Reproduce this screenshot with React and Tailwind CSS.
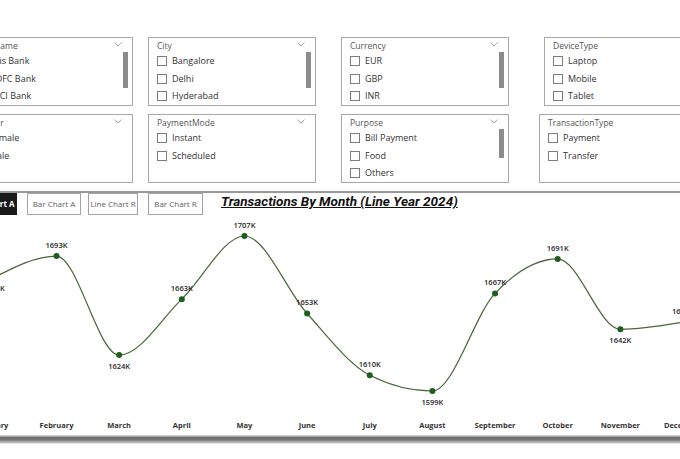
import React from "react";

const FONT = { fontFamily: '"Open Sans", "Noto Sans", sans-serif' };

function Chevron() {
  return (
    <svg className="absolute right-[10px] top-[4px]" width="8" height="5" viewBox="0 0 8 5">
      <polyline points="0.5,0.5 4,4 7.5,0.5" fill="none" stroke="#9a9a9a" strokeWidth="0.9" />
    </svg>
  );
}

function Slicer({ title, items, chevron = true, scrollH = 0, className = "" }) {
  return (
    <div className={"relative h-[69px] w-[168px] shrink-0 border border-[#a9a9a9] bg-white pl-[8px] pt-[1px] " + className}>
      <div className="h-[13px] text-[8.5px] leading-[13px] text-[#555]">{title}</div>
      {items.map((it) => (
        <div key={it} className="flex h-[17.5px] items-center gap-[5px] pt-[1px]">
          <div className="h-[10px] w-[10px] shrink-0 border border-[#7d7d7d] bg-white" />
          <div className="whitespace-nowrap text-[9px] leading-[12px] text-[#333]">{it}</div>
        </div>
      ))}
      {chevron && <Chevron />}
      {scrollH > 0 && (
        <div className="absolute right-[4px] top-[14px] w-[5px] bg-[#8c8c8c]" style={{ height: scrollH }} />
      )}
    </div>
  );
}

const months = ["January", "February", "March", "April", "May", "June", "July", "August", "September", "October", "November", "December"];
const values = [1678, 1693, 1624, 1663, 1707, 1653, 1610, 1599, 1667, 1691, 1642, 1647];
const below = [true, false, true, false, false, false, false, true, false, false, true, false];
const TOP = 215;

function monotonePath(pts) {
  const n = pts.length;
  const s = [];
  for (let i = 0; i < n - 1; i++) s.push((pts[i + 1][1] - pts[i][1]) / (pts[i + 1][0] - pts[i][0]));
  const t = new Array(n).fill(0);
  for (let i = 1; i < n - 1; i++) {
    const h0 = pts[i][0] - pts[i - 1][0];
    const h1 = pts[i + 1][0] - pts[i][0];
    const s0 = s[i - 1];
    const s1 = s[i];
    const p = (s0 * h1 + s1 * h0) / (h0 + h1);
    t[i] = (Math.sign(s0) + Math.sign(s1)) * Math.min(Math.abs(s0), Math.abs(s1), 0.5 * Math.abs(p)) || 0;
  }
  t[0] = (3 * s[0] - t[1]) / 2;
  t[n - 1] = (3 * s[n - 2] - t[n - 2]) / 2;
  let d = `M${pts[0][0]},${pts[0][1]}`;
  for (let i = 0; i < n - 1; i++) {
    const dx = (pts[i + 1][0] - pts[i][0]) / 3;
    d += ` C${pts[i][0] + dx},${pts[i][1] + dx * t[i]} ${pts[i + 1][0] - dx},${pts[i + 1][1] - dx * t[i + 1]} ${pts[i + 1][0]},${pts[i + 1][1]}`;
  }
  return d;
}

function Chart() {
  const pts = values.map((v, i) => [56.5 + (i - 1) * 62.65, 236 + (1707 - v) * 1.435 - TOP]);
  const d = monotonePath(pts);
  return (
    <svg width="680" height="220" viewBox="0 0 680 220" className="block" style={FONT}>
      <path d={d} fill="none" stroke="#466638" strokeWidth="1.2" />
      {pts.map(([x, y], i) => (
        <g key={i}>
          <circle cx={x} cy={y} r="3" fill="#1d5e1d" />
          <text x={x} y={below[i] ? y + 13.7 : y - 8.3} textAnchor="middle" fontSize="7.5" fontWeight="600" fill="#252525">
            {values[i]}K
          </text>
          <text x={x} y={212.5} textAnchor="middle" fontSize="7.5" fontWeight="700" fill="#333">
            {months[i]}
          </text>
        </g>
      ))}
    </svg>
  );
}

function Btn({ label, className = "", dark = false }) {
  return (
    <div
      className={
        "flex h-[22px] shrink-0 items-center justify-center whitespace-nowrap text-[8px] " +
        (dark ? "bg-[#1a1a1a] font-bold text-white " : "border border-[#a3a3a3] bg-white text-[#606060] ") +
        className
      }
    >
      {label}
    </div>
  );
}

export default function App() {
  return (
    <div className="relative h-[459px] w-[680px] overflow-hidden bg-white" style={FONT}>
      <div className="pt-[37px]">
        <div className="ml-[-35px] flex">
          <Slicer title="BankName" items={["Axis Bank", "HDFC Bank", "ICICI Bank"]} scrollH={36} />
          <Slicer title="City" items={["Bangalore", "Delhi", "Hyderabad"]} scrollH={36} className="ml-[15px]" />
          <Slicer title="Currency" items={["EUR", "GBP", "INR"]} scrollH={36} className="ml-[25px] w-[167px]" />
          <Slicer title="DeviceType" items={["Laptop", "Mobile", "Tablet"]} chevron={false} className="ml-[35px]" />
        </div>
        <div className="ml-[-35px] mt-[8px] flex">
          <Slicer title="Gender" items={["Female", "Male"]} />
          <Slicer title="PaymentMode" items={["Instant", "Scheduled"]} className="ml-[15px]" />
          <Slicer title="Purpose" items={["Bill Payment", "Food", "Others"]} scrollH={29} className="ml-[25px] w-[167px]" />
          <Slicer title="TransactionType" items={["Payment", "Transfer"]} chevron={false} className="ml-[30px] pl-[7px]" />
        </div>
      </div>
      <div className="mt-[8px] h-[2px] bg-[#979797]" />
      <div className="flex h-[22px] items-start">
        <Btn label="Line Chart A" dark className="ml-[-37px] w-[54px]" />
        <Btn label="Bar Chart A" className="ml-[10px] w-[54px]" />
        <Btn label="Line Chart R" className="ml-[7px] w-[50px]" />
        <Btn label="Bar Chart R" className="ml-[10px] w-[55px]" />
        <div
          className="ml-[18px] mt-[0px] whitespace-nowrap text-[13.5px] font-bold italic leading-[17px] text-[#111] underline"
          style={{ fontFamily: '"Roboto", "Liberation Sans", sans-serif' }}
        >
          Transactions By Month (Line Year 2024)
        </div>
      </div>
      <Chart />
      <div className="h-[9px] bg-[linear-gradient(to_bottom,#e6e6e6_0%,#6b6b6b_30%,#7a7a7a_55%,#b5b5b5_80%,#f0f0f0_100%)]" />
    </div>
  );
}
